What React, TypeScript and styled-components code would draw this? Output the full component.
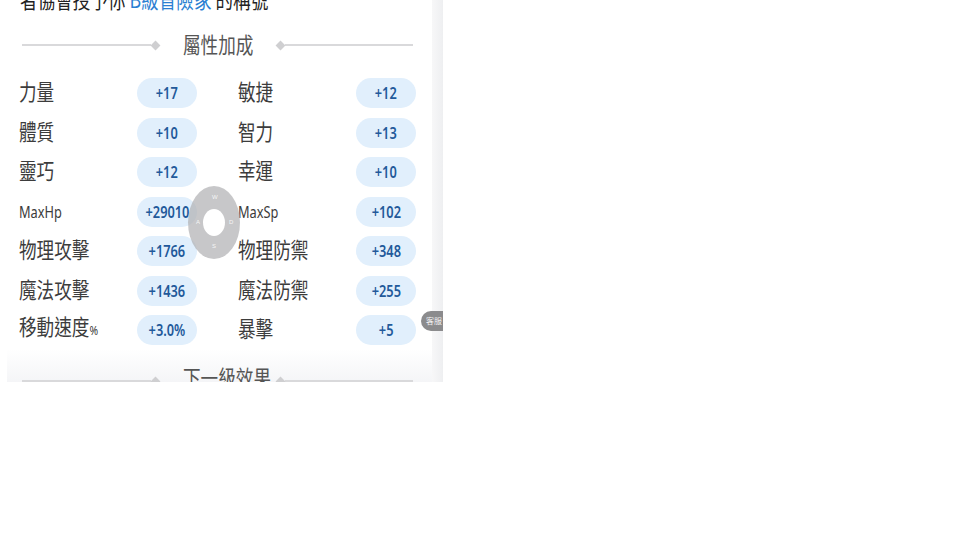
import React from "react";
import styled, { createGlobalStyle } from "styled-components";

const Global = createGlobalStyle`
  html, body { margin: 0; padding: 0; background: #ffffff; }
  body { font-family: "Noto Sans", "Noto Sans CJK TC", sans-serif; }
`;

const Frame = styled.div`
  position: relative;
  width: 443px;
  height: 382px;
  overflow: hidden;
  display: flex;
  background: #ffffff;
`;

const Main = styled.div`
  width: 432px;
  display: flex;
  flex-direction: column;
  & > * { flex-shrink: 0; }
`;

const SideStrip = styled.div`
  width: 11px;
  background: linear-gradient(to right, #f7f7f8, #eeeff1);
`;

const Squish = styled.span<{ $origin?: string }>`
  display: inline-block;
  white-space: nowrap;
  transform: scaleX(0.8);
  transform-origin: ${(p) => p.$origin || "left"} center;
`;

const TopLine = styled.div`
  margin-top: -14px;
  height: 24px;
  padding-left: 20px;
  font-family: "Noto Sans CJK TC", sans-serif;
  font-size: 22px;
  line-height: 24px;
  color: #222222;
`;

const Highlight = styled.span`
  color: #2b7fd2;
`;

const Heading = styled.div<{ $left: number; $top: number }>`
  display: flex;
  align-items: center;
  height: 30px;
  margin: ${(p) => p.$top}px 19px 0 ${(p) => p.$left}px;
`;

const Rule = styled.div`
  flex: 1;
  height: 2px;
  background: #d9d9db;
`;

const Diamond = styled.div`
  width: 7px;
  height: 7px;
  margin: 0 1px;
  background: #cfcfd1;
  transform: rotate(45deg);
`;

const HeadingTitle = styled.div<{ $raise: number }>`
  width: 70px;
  margin: 0 23px;
  font-family: "Noto Sans CJK TC", sans-serif;
  font-size: 22px;
  line-height: 30px;
  color: #555555;
  transform: translateY(${(p) => -p.$raise}px);
`;

const StatGrid = styled.div`
  display: grid;
  grid-template-columns: 178px 178px;
  grid-auto-rows: 39.5px;
  column-gap: 41px;
  margin-top: 12.25px;
  padding-left: 19px;
`;

const Cell = styled.div`
  display: grid;
  grid-template-columns: 118px 60px;
  align-items: center;
`;

const Label = styled.div<{ $small?: boolean }>`
  font-family: "Noto Sans", "Noto Sans CJK TC", sans-serif;
  font-size: ${(p) => (p.$small ? "16px" : "22px")};
  font-weight: 400;
  color: #3c3c3c;
  line-height: 30px;
  transform: translateY(${(p) => (p.$small ? 1 : -1)}px);
`;

const Percent = styled.span`
  font-size: 13px;
`;

const Pill = styled.div`
  width: 60px;
  height: 30px;
  border-radius: 15px;
  background: #e1effc;
  display: flex;
  align-items: center;
  justify-content: center;
  font-family: "Noto Sans", sans-serif;
  font-weight: 600;
  font-size: 16px;
  color: #22599a;
  transform: translateY(1px);
`;

const Footer = styled.div`
  margin-left: 7px;
  padding-top: 17.25px;
  flex: 1 0 auto;
  background: linear-gradient(to bottom, #ffffff 0%, #f0f1f4 100%);
`;

const Joystick = styled.div`
  position: absolute;
  left: 188px;
  top: 186px;
  width: 52px;
  height: 73px;
  border-radius: 50%;
  background: rgba(178, 178, 180, 0.72);
`;

const JoyCenter = styled.div`
  position: absolute;
  left: 15px;
  top: 23px;
  width: 22px;
  height: 27px;
  border-radius: 50%;
  background: #ffffff;
`;

const JoyKey = styled.span<{ $x: number; $y: number }>`
  position: absolute;
  left: ${(p) => p.$x}px;
  top: ${(p) => p.$y}px;
  font-family: "Liberation Sans", sans-serif;
  font-size: 6px;
  color: rgba(255, 255, 255, 0.85);
`;

const ServiceBadge = styled.div`
  position: absolute;
  left: 421px;
  top: 311px;
  width: 34px;
  height: 20px;
  border-radius: 10px;
  background: #8b8b8d;
  color: #f2f2f2;
  font-family: "Noto Sans CJK TC", sans-serif;
  font-size: 8px;
  line-height: 20px;
  padding-left: 5px;
  box-sizing: border-box;
`;

type Stat = { label: React.ReactNode; value: string; small?: boolean };

const stats: Stat[] = [
  { label: "力量", value: "+17" },
  { label: "敏捷", value: "+12" },
  { label: "體質", value: "+10" },
  { label: "智力", value: "+13" },
  { label: "靈巧", value: "+12" },
  { label: "幸運", value: "+10" },
  { label: "MaxHp", value: "+29010", small: true },
  { label: "MaxSp", value: "+102", small: true },
  { label: "物理攻擊", value: "+1766" },
  { label: "物理防禦", value: "+348" },
  { label: "魔法攻擊", value: "+1436" },
  { label: "魔法防禦", value: "+255" },
  {
    label: (
      <>
        移動速度<Percent>%</Percent>
      </>
    ),
    value: "+3.0%",
  },
  { label: "暴擊", value: "+5" },
];

const SectionHeading: React.FC<{
  title: string;
  left: number;
  top: number;
  raise: number;
}> = ({ title, left, top, raise }) => (
  <Heading $left={left} $top={top}>
    <Rule />
    <Diamond />
    <HeadingTitle $raise={raise}>
      <Squish>{title}</Squish>
    </HeadingTitle>
    <Diamond />
    <Rule />
  </Heading>
);

export default function App() {
  return (
    <>
      <Global />
      <Frame>
        <Main>
          <TopLine>
            <Squish>
              者協會授予你 <Highlight>B級冒險家</Highlight> 的稱號
            </Squish>
          </TopLine>
          <SectionHeading title="屬性加成" left={22} top={20} raise={2} />
          <StatGrid>
            {stats.map((s, i) => (
              <Cell key={i}>
                <Label $small={s.small}>
                  <Squish>{s.label}</Squish>
                </Label>
                <Pill>
                  <Squish $origin="center">{s.value}</Squish>
                </Pill>
              </Cell>
            ))}
          </StatGrid>
          <Footer>
            <SectionHeading title="下一級效果" left={15} top={0} raise={5} />
          </Footer>
        </Main>
        <SideStrip />
        <Joystick>
          <JoyCenter />
          <JoyKey $x={24} $y={8}>W</JoyKey>
          <JoyKey $x={8} $y={33}>A</JoyKey>
          <JoyKey $x={41} $y={33}>D</JoyKey>
          <JoyKey $x={24} $y={57}>S</JoyKey>
        </Joystick>
        <ServiceBadge>客服</ServiceBadge>
      </Frame>
    </>
  );
}
